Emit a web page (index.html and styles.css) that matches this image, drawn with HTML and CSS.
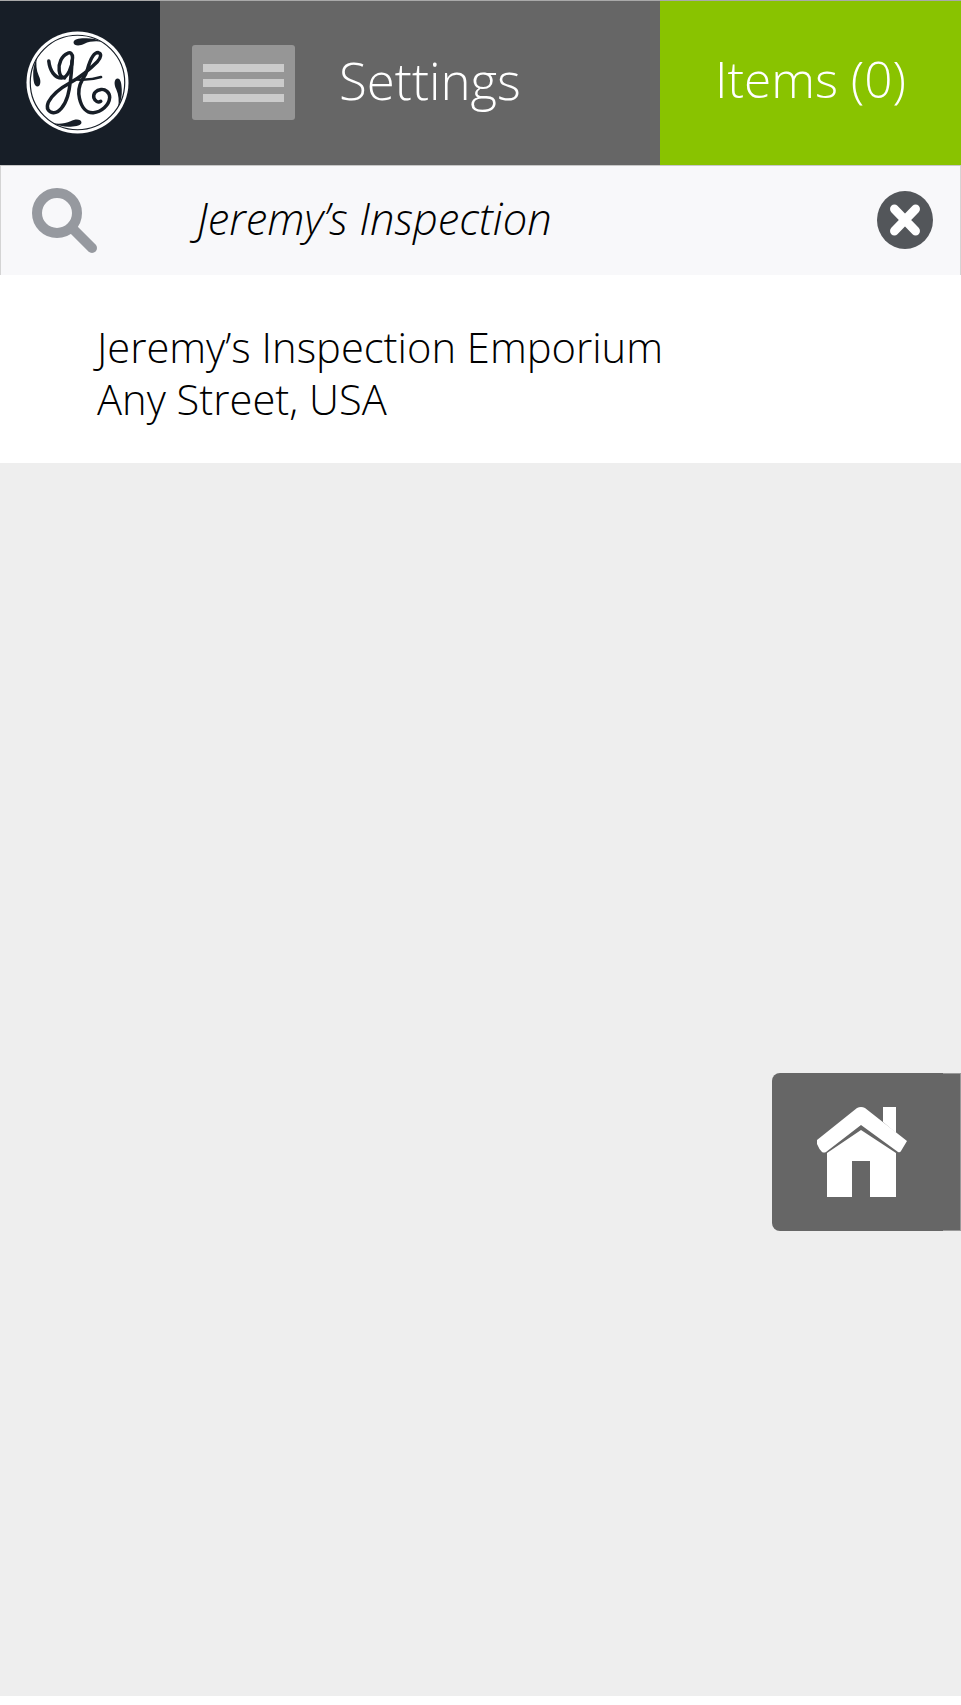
FILE: index.html
```html
<!DOCTYPE html>
<html lang="en">
<head>
<meta charset="utf-8">
<title>Settings</title>
<link rel="stylesheet" href="styles.css">
</head>
<body>
<div class="page">
  <header class="topbar">
    <div class="brand">
      <svg class="logo" viewBox="0 0 104 104">
        <circle cx="52" cy="52" r="51.5" fill="#fff"/>
        <circle cx="52" cy="52" r="47.700" fill="none" stroke="#171e27" stroke-width="1.200"/>
        <g fill="#171e27">
          <path d="M48 11.500C48 8.500 53 7.500 59 7.300C65 7 71 8 77 11C71 9.800 64 10.500 59 12.800C54 15.500 48 15 48 11.500z"/>
          <path d="M48 11.500C48 8.500 53 7.500 59 7.300C65 7 71 8 77 11C71 9.800 64 10.500 59 12.800C54 15.500 48 15 48 11.500z" transform="rotate(90 52 52)"/>
          <path d="M48 11.500C48 8.500 53 7.500 59 7.300C65 7 71 8 77 11C71 9.800 64 10.500 59 12.800C54 15.500 48 15 48 11.500z" transform="rotate(180 52 52)"/>
          <path d="M48 11.500C48 8.500 53 7.500 59 7.300C65 7 71 8 77 11C71 9.800 64 10.500 59 12.800C54 15.500 48 15 48 11.500z" transform="rotate(270 52 52)"/>
        </g>
        <g fill="none" stroke="#171e27" stroke-width="3.500" stroke-linecap="round" stroke-linejoin="round">
          <path d="M23 30.300C24 40 29 47.500 36 47.500C42 47.500 47 36 47 27C47 23 45 21 42 22.500C36 25 32.500 33 33.500 40C34 44.500 36 47 39 47.500"/>
          <path d="M46.500 30C46 42 45 55 42 66C39 76 33 83 27.500 82.500C22.500 82 20 78 22.500 72C26 65 34 58 45 52C54 47 65 38 72 31C76 27 76.500 22.500 73 21.800C68 21.500 64.500 30 62 39C60 45 58 47 56.500 50C53.500 55 52.500 61 54 68C56 77 61 83 68 82.500C76 82 84 75 84.500 67C84.500 62 80 58.500 75.800 59C71 59.500 67.500 63 68.500 67.500C69.500 71 73 72.500 75.500 71"/>
          <path d="M52 49C60 49.500 68 49 75.800 46.500" stroke-width="2.600"/>
        </g>
      </svg>
    </div>
    <div class="settings">
      <div class="menu-btn">
        <span class="menu-line"></span>
        <span class="menu-line"></span>
        <span class="menu-line"></span>
      </div>
      <span class="settings-label">Settings</span>
    </div>
    <div class="items">Items (0)</div>
  </header>
  <div class="search">
    <svg class="search-icon" viewBox="0 0 66 66">
      <circle cx="25" cy="25" r="20" fill="none" stroke="#96999f" stroke-width="10"/>
      <path d="M40 40l20 20" stroke="#96999f" stroke-width="10" stroke-linecap="round"/>
    </svg>
    <span class="search-text">Jeremy’s Inspection</span>
    <svg class="clear-icon" viewBox="0 0 58 58" preserveAspectRatio="none">
      <circle cx="29" cy="29" r="29" fill="#53565a"/>
      <path d="M18 18l22 22M40 18L18 40" stroke="#fff" stroke-width="9" stroke-linecap="round"/>
    </svg>
  </div>
  <div class="result">
    <div>Jeremy’s Inspection Emporium</div>
    <div>Any Street, USA</div>
  </div>
  <main class="content"></main>
  <a class="home">
    <svg class="home-icon" viewBox="0 0 90 90">
      <path d="M66 0h13v26L66 15z" fill="#fff"/>
      <path d="M0 33 40 1q4-2 8 0l42 33-6 10q-1 2-3 1L44 18 9 45q-2 1-4 0q-3-3-5-8z" fill="#fff"/>
      <path d="M10 46 44 23l35 23v44H53V54H35v36H10z" fill="#fff"/>
    </svg>
  </a>
</div>
</body>
</html>
```
FILE: styles.css
```css
* { box-sizing: border-box; }
html, body { margin: 0; padding: 0; background: #fff; }
.page {
  position: relative;
  width: 961px;
  height: 1705px;
  display: flex;
  flex-direction: column;
  font-family: "Open Sans", "Liberation Sans", sans-serif;
  font-weight: 300;
  color: #000;
}
.topbar {
  display: flex;
  height: 166px;
  border-top: 1px solid #a9a9a9;
  border-bottom: 1px solid #c8c8c8;
}
.brand {
  width: 160px;
  background: #171e27;
  display: flex;
  align-items: center;
  padding-left: 26px;
  padding-bottom: 1px;
}
.logo { width: 103px; height: 103px; display: block; }
.settings {
  flex: 1;
  background: #666;
  display: flex;
  align-items: center;
  padding-left: 32px;
}
.menu-btn {
  width: 103px;
  height: 75px;
  margin-bottom: 1px;
  background: #969696;
  border-radius: 3px;
  display: flex;
  flex-direction: column;
  justify-content: center;
  align-items: center;
  gap: 7px;
}
.menu-line { width: 81px; height: 8px; background: #cbcbcb; }
.settings-label {
  margin-left: 44px;
  margin-bottom: 6px;
  font-size: 51px;
  color: #fff;
  line-height: 1;
}
.items {
  width: 301px;
  background: #89c300;
  color: #fff;
  font-size: 49.500px;
  line-height: 1;
  display: flex;
  align-items: center;
  justify-content: center;
  padding-bottom: 6px;
}
.search {
  height: 109px;
  background: #f8f8fa;
  border-left: 1px solid #d4d4d4;
  border-right: 1px solid #d4d4d4;
  display: flex;
  align-items: center;
  padding-left: 31px;
  padding-right: 27px;
}
.search-icon { width: 66px; height: 66px; display: block; }
.search-text {
  margin-left: 99px;
  margin-bottom: 5px;
  font-size: 43.500px;
  font-style: italic;
  flex: 1;
}
.clear-icon { width: 56px; height: 58px; margin-bottom: 2px; display: block; }
.result {
  height: 188px;
  background: #fff;
  padding: 46px 0 0 97px;
  font-size: 41.700px;
  line-height: 52px;
}
.content { height: 1233px; background: #eee; }
.home {
  position: absolute;
  right: 0;
  top: 1073px;
  width: 189px;
  height: 158px;
  background: #666;
  border-radius: 8px 0 0 8px;
  display: flex;
  align-items: center;
  padding-left: 45px;
}
.home::after {
  content: "";
  position: absolute;
  right: 0;
  top: 0;
  bottom: 0;
  width: 17px;
  border-top: 1px solid #999;
  border-bottom: 1px solid #999;
  border-right: 1px solid #999;
}
.home-icon { width: 90px; height: 90px; display: block; }
```
